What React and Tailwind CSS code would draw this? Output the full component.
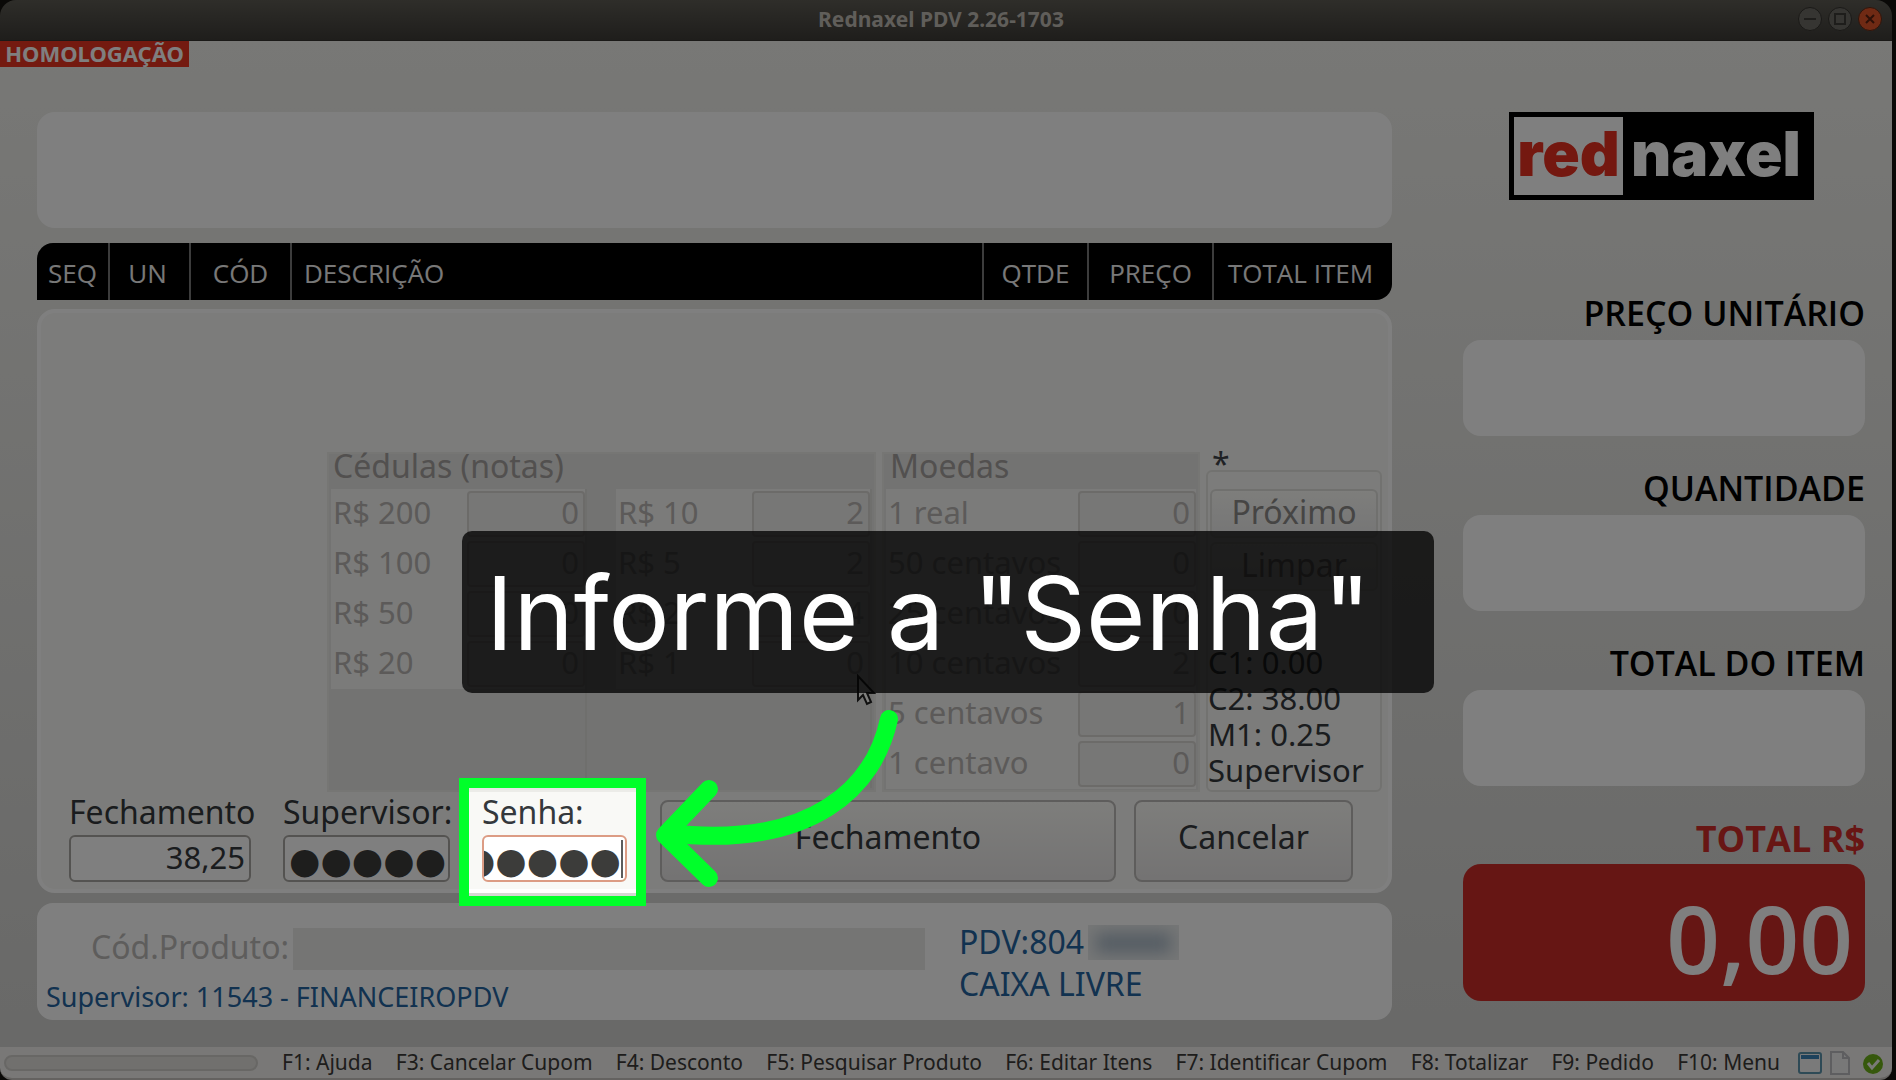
import { useState } from 'react';

const columns = [
  { label: 'SEQ', style: 'w-[72px] text-center' },
  { label: 'UN', style: 'w-[81px] pr-1 text-center' },
  { label: 'CÓD', style: 'w-[101px] text-center' },
  { label: 'DESCRIÇÃO', style: 'pl-3 text-left' },
  { label: 'QTDE', style: 'w-[105px] text-center' },
  { label: 'PREÇO', style: 'w-[125px] text-center' },
  { label: 'TOTAL ITEM', style: 'w-[179px] pl-[14px] text-left' },
];

const bills = [
  [
    { label: 'R$ 200', value: '0' },
    { label: 'R$ 100', value: '0' },
    { label: 'R$ 50', value: '0' },
    { label: 'R$ 20', value: '0' },
  ],
  [
    { label: 'R$ 10', value: '2' },
    { label: 'R$ 5', value: '2' },
    { label: 'R$ 2', value: '4' },
    { label: 'R$ 1', value: '0' },
  ],
];

const coins = [
  { label: '1 real', value: '0' },
  { label: '50 centavos', value: '0' },
  { label: '25 centavos', value: '0' },
  { label: '10 centavos', value: '2' },
  { label: '5 centavos', value: '1' },
  { label: '1 centavo', value: '0' },
];

const summary = ['C1: 0.00', 'C2: 38.00', 'M1: 0.25', 'Supervisor'];

const totals = ['PREÇO UNITÁRIO', 'QUANTIDADE', 'TOTAL DO ITEM'];

const shortcuts = [
  'F1: Ajuda',
  'F3: Cancelar Cupom',
  'F4: Desconto',
  'F5: Pesquisar Produto',
  'F6: Editar Itens',
  'F7: Identificar Cupom',
  'F8: Totalizar',
  'F9: Pedido',
  'F10: Menu',
];

function TitleBar() {
  return (
    <header className="flex h-[41px] items-center rounded-t-2xl border-b border-[#34322e] bg-linear-to-b from-[#5e5c54] to-[#3e3c38] pr-[10px]">
      <div className="w-[84px]" />
      <h1 className="flex-1 pb-[2px] text-center text-[21px] leading-[36px] font-bold text-[#c0bcb4]">Rednaxel PDV 2.26-1703</h1>
      <div className="flex gap-[6px] pb-[3px]">
        <button aria-label="Minimizar" className="h-6 w-6 rounded-full border border-[#34322e] bg-[#6c6a64]">
          <svg viewBox="0 0 22 22" className="h-full w-full" fill="none" stroke="#3c3a36" strokeWidth="2">
            <path d="M5 11h12" />
          </svg>
        </button>
        <button aria-label="Maximizar" className="h-6 w-6 rounded-full border border-[#34322e] bg-[#6c6a64]">
          <svg viewBox="0 0 22 22" className="h-full w-full" fill="none" stroke="#3c3a36" strokeWidth="2">
            <rect x="6" y="6" width="10" height="10" />
          </svg>
        </button>
        <button aria-label="Fechar" className="h-6 w-6 rounded-full border border-[#5a2a18] bg-[#e05428]">
          <svg viewBox="0 0 22 22" className="h-full w-full" fill="none" stroke="#5a2010" strokeWidth="2">
            <path d="M7 7l8 8M15 7l-8 8" />
          </svg>
        </button>
      </div>
    </header>
  );
}

function CountRow({ label, value }) {
  return (
    <label className="flex h-[50px] items-center justify-between bg-[#f7f7f4] pl-[2px] text-[31px] leading-[46px] text-[#b8b4b2]">
      <span className="pb-1">{label}</span>
      <input
        disabled
        defaultValue={value}
        className="h-[46px] w-[118px] rounded border-2 border-[#d8d6d3] bg-[#efefec] pr-1 pb-1 text-right"
      />
    </label>
  );
}

function CashCount() {
  return (
    <div className="flex justify-end gap-[6px] pr-[10px]">
      <section className="h-[340px] w-[549px] border-2 border-[#ecece8] bg-[#e7e7e4] px-[2px]">
        <h2 className="h-[35px] pl-[2px] text-[32px] leading-[24px] text-[#a4a09e]">Cédulas (notas)</h2>
        <div className="flex justify-between">
          {bills.map((group) => (
            <div key={group[0].label} className="h-[299px] w-[256px] border-r-2 border-[#dededb]">
              {group.map((bill) => (
                <CountRow key={bill.label} label={bill.label} value={bill.value} />
              ))}
            </div>
          ))}
        </div>
      </section>

      <section className="h-[340px] w-[318px] border-2 border-[#ecece8] bg-[#e7e7e4] px-[2px]">
        <h2 className="h-[35px] pl-1 text-[32px] leading-[24px] text-[#a4a09e]">Moedas</h2>
        {coins.map((coin) => (
          <CountRow key={coin.label} label={coin.label} value={coin.value} />
        ))}
      </section>

      <section className="flex h-[340px] w-[176px] flex-col text-[32px]">
        <h2 className="h-[18px] pl-[6px] leading-[24px] text-[#40444a]">*</h2>
        <div className="flex flex-1 flex-col rounded-md border-2 border-[#e4e4e0] px-[2px] pt-[17px]">
          <button className="h-[49px] rounded-md border-2 border-[#e0e0dc] bg-linear-to-b from-[#fcfcf8] to-[#ececec] pb-1 leading-[40px] text-[#8c8a88]">
            Próximo
          </button>
          <button className="mt-1 h-[49px] rounded-md border-2 border-[#e0e0dc] bg-linear-to-b from-[#fcfcf8] to-[#ececec] pb-1 leading-[40px] text-[#8c8a88]">
            Limpar
          </button>
          <ul className="mt-auto mb-[2px] -ml-[2px] text-[31px] text-[#34383c]">
            {summary.map((line) => (
              <li key={line} className="h-[36px] leading-[36px] whitespace-nowrap">{line}</li>
            ))}
          </ul>
        </div>
      </section>
    </div>
  );
}

function ClosingForm() {
  const [closing, setClosing] = useState('38,25');

  return (
    <form className="mt-1 flex items-end pr-[39px] pl-8 text-[32px] text-[#34383c]" onSubmit={(e) => e.preventDefault()}>
      <div className="mr-8 w-[182px]">
        <label htmlFor="closing" className="block leading-[32px]">Fechamento</label>
        <input
          id="closing"
          value={closing}
          onChange={(e) => setClosing(e.target.value)}
          className="mt-[7px] block h-[47px] w-full rounded-md border-2 border-[#a8a6a2] bg-white pr-1 pb-1 text-right text-[31px] leading-[40px]"
        />
      </div>
      <div className="mr-8 w-[167px]">
        <label htmlFor="supervisor" className="block leading-[32px]">Supervisor:</label>
        <input
          id="supervisor"
          readOnly
          value="●●●●●"
          className="mt-[7px] block h-[47px] w-full rounded-md border-2 border-[#a8a6a2] bg-white pt-1 pl-1 font-['DejaVu_Sans',sans-serif] text-[36px] text-[#3c3c3a]"
        />
      </div>
      <div className="relative mr-[33px] w-[145px]">
        <label htmlFor="password" className="block leading-[32px]">Senha:</label>
        <div className="mt-[7px] flex h-[47px] items-center rounded-md border-2 border-[#dc9c84] bg-white">
          <input
            id="password"
            dir="rtl"
            readOnly
            value="●●●●●"
            className="h-full w-full min-w-0 pt-1 font-['DejaVu_Sans',sans-serif] text-[36px] text-[#3c3c3a] outline-none"
          />
          <span className="mr-[2px] h-[38px] w-[2px] shrink-0 bg-[#5c5c5c]" />
        </div>
        {/* spotlight: the spread shadow dims everything outside the frame */}
        <div className="pointer-events-none absolute -top-[18px] -left-[23px] z-10 h-[128px] w-[187px] border-10 border-[#00ff2a] shadow-[0_0_0_3000px_rgba(0,0,0,0.5)]" />
      </div>
      <button className="mr-[18px] h-[82px] flex-1 rounded-lg border-2 border-[#bcbab8] bg-linear-to-b from-[#fcfcf8] to-[#e8e6e6] pb-2">
        Fechamento
      </button>
      <button className="h-[82px] w-[219px] rounded-lg border-2 border-[#bcbab8] bg-linear-to-b from-[#fcfcf8] to-[#e8e6e6] pb-2">
        Cancelar
      </button>
    </form>
  );
}

function ProductPanel() {
  return (
    <section className="mt-[10px] flex h-[117px] rounded-2xl bg-white pl-[9px]">
      <div className="w-[913px] pt-[25px]">
        <div className="flex items-center pl-[45px]">
          <label htmlFor="product" className="w-[202px] pb-1 text-[32px] leading-[38px] text-[#bcbab8]">Cód.Produto:</label>
          <input id="product" disabled className="h-[42px] w-[632px] bg-[#ebebe8]" />
        </div>
        <p className="text-[27px] leading-[54px] text-[#2464a0]">Supervisor: 11543 - FINANCEIROPDV</p>
      </div>
      <div className="pt-[18px] text-[32px] leading-[42px] text-[#2464a0]">
        <p className="flex items-center gap-1">
          PDV:804
          <span className="h-[35px] w-[91px] overflow-hidden bg-[#eceeee] p-2">
            <span className="block h-5 w-full bg-[#a8b8c6] blur-[8px]" />
          </span>
        </p>
        <p>CAIXA LIVRE</p>
      </div>
    </section>
  );
}

function Sidebar() {
  return (
    <aside className="flex w-[402px] flex-col pt-[71px] font-['Open_Sans',sans-serif]">
      <div className="mr-[51px] ml-auto flex h-[88px] w-[305px] items-center bg-black p-[5px] font-['Inter',sans-serif] text-[62px] leading-[62px] font-black">
        <span className="flex h-full w-[109px] items-center justify-center bg-white pb-1 text-[#e83020]">red</span>
        <span className="flex-1 pb-1 text-center text-white">naxel</span>
      </div>
      <div className="mt-[92px]">
        {totals.map((label) => (
          <label key={label} className="block text-right text-[34px] leading-[42px] font-semibold text-black">
            {label}
            <input readOnly className="mt-[6px] mb-[31px] block h-[96px] w-full rounded-[18px] bg-white px-4 text-right" />
          </label>
        ))}
        <p className="pb-1 text-right text-[36px] leading-[43px] font-bold text-[#d02c28]">TOTAL R$</p>
        <output className="block h-[137px] rounded-[18px] bg-[#cc2c28] pr-3 text-right text-[94px] leading-[149px] font-semibold text-white">
          0,00
        </output>
      </div>
    </aside>
  );
}

function StatusBar() {
  return (
    <footer className="flex h-[33px] items-center rounded-b-xl border-b-2 border-[#c8c4c0] bg-[#f2f1ee] pr-[8px] pl-1 text-[#3c3a38]">
      <div className="h-4 w-[254px] rounded-full border-2 border-[#d0ceca] bg-[#e2e0dc]" />
      <nav className="ml-6 flex flex-1 justify-between pb-[2px] text-[21px] leading-[28px]">
        {shortcuts.map((item) => (
          <span key={item}>{item}</span>
        ))}
      </nav>
      <div className="ml-[18px] flex items-center gap-2">
        <svg width="24" height="24" viewBox="0 0 24 24">
          <rect x="1" y="2" width="22" height="20" rx="2" fill="#f4f4f4" stroke="#5c94ac" strokeWidth="2" />
          <path d="M3 4h18v4H3z" fill="#3c84b8" />
        </svg>
        <svg width="20" height="24" viewBox="0 0 20 24">
          <path d="M1 1h12l6 6v16H1z" fill="#f0f0f0" stroke="#bcbcc0" strokeWidth="2" />
          <path d="M13 1v6h6" fill="none" stroke="#bcbcc0" strokeWidth="2" />
        </svg>
        <svg width="22" height="24" viewBox="0 0 22 24" className="ml-1">
          <circle cx="11" cy="13" r="10" fill="#6cb018" />
          <path d="M6 12l4 5 7-8" fill="none" stroke="#f4f4f0" strokeWidth="3" />
        </svg>
      </div>
    </footer>
  );
}

function Annotation() {
  return (
    <>
      {/* mouse pointer, under the tip */}
      <svg className="absolute top-[674px] left-[856px] z-20" width="20" height="32" viewBox="0 0 20 32">
        <path d="M2 2v24l5-5 4 9 4-2-4-9h7z" fill="#80807e" stroke="#101010" strokeWidth="2" />
      </svg>
      <div className="absolute top-[531px] left-[462px] z-30 h-[162px] w-[972px] rounded-[10px] bg-[rgba(4,4,4,0.79)] pl-6 font-['Inter',sans-serif] text-[102px] leading-[164px] whitespace-nowrap text-white">
        Informe a "Senha"
      </div>
      <svg
        className="absolute top-[700px] left-[650px] z-40"
        width="260"
        height="200"
        viewBox="650 700 260 200"
        fill="none"
        stroke="#00ff2a"
        strokeWidth="18"
        strokeLinecap="round"
        strokeLinejoin="round"
      >
        <path d="M889 719C875 785 815 850 668 833" />
        <path d="M709 789L665 835L709 878" />
      </svg>
    </>
  );
}

export default function App() {
  return (
    <div className="relative min-h-screen overflow-hidden bg-[#14120e] pr-1 font-['Noto_Sans',sans-serif]">
      <div className="flex min-h-screen flex-col">
        <TitleBar />
        <main className="flex flex-1 bg-linear-to-b from-[#f0f0ec] to-[#d2d2d0] pr-[27px]">
          <div className="mr-[71px] flex-1">
            <span className="block h-[26px] w-[189px] bg-[#e83420] text-center text-[22px] leading-[24px] font-bold text-white">
              HOMOLOGAÇÃO
            </span>
            <div className="mt-[45px] ml-[37px]">
              <div className="h-[116px] rounded-[18px] bg-white" />
              <table className="mt-[15px] h-[57px] w-full table-fixed overflow-hidden rounded-tl-2xl rounded-br-2xl bg-black font-['Open_Sans',sans-serif] text-[26px] text-[#f0f0f0]">
                <thead>
                  <tr className="divide-x-2 divide-[#787878]">
                    {columns.map((column) => (
                      <th key={column.label} className={`${column.style} pt-1 font-normal`}>{column.label}</th>
                    ))}
                  </tr>
                </thead>
              </table>
              <section className="mt-[9px] h-[584px] rounded-[18px] border-4 border-white bg-[#f9f9f6] pt-[139px]">
                <div className="-mx-1">
                  <CashCount />
                  <ClosingForm />
                </div>
              </section>
              <ProductPanel />
            </div>
          </div>
          <Sidebar />
        </main>
        <StatusBar />
      </div>
      <Annotation />
    </div>
  );
}
